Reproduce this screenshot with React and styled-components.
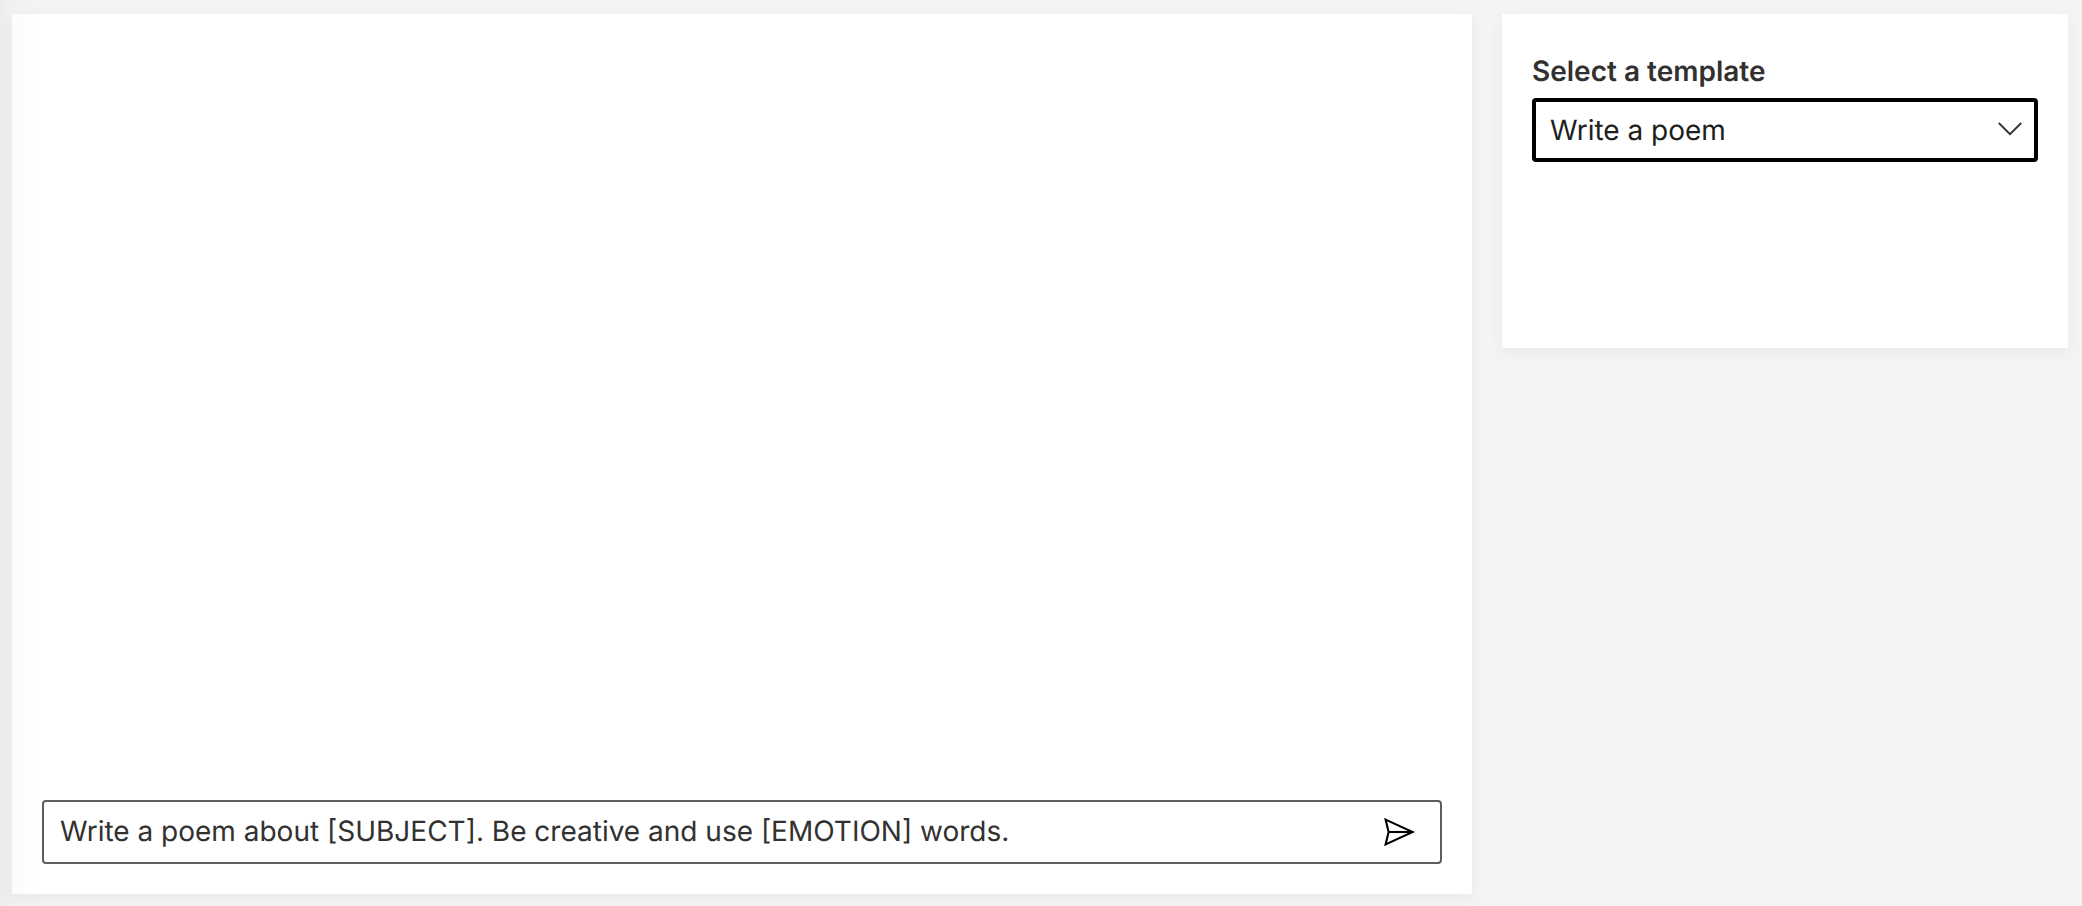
import React, { useState } from "react";
import styled, { createGlobalStyle } from "styled-components";

const GlobalStyle = createGlobalStyle`
  *, *::before, *::after { box-sizing: border-box; }
  body {
    margin: 0;
    background: #f4f4f4;
    color: #323130;
    font-family: Inter, "Liberation Sans", sans-serif;
    font-size: 28px;
    font-weight: 400;
    line-height: 40px;
    text-rendering: geometricPrecision;
  }
`;

const Page = styled.div`
  position: relative;
  display: grid;
  grid-template-columns: minmax(0, 1fr) 566px;
  gap: 30px;
  align-items: start;
  min-height: 100vh;
  padding: 14px 14px 12px 12px;
`;

const EdgeShade = styled.div`
  position: absolute;
  top: 0;
  bottom: 0;
  left: 0;
  width: 44px;
  pointer-events: none;
  background: linear-gradient(to right, rgba(0, 0, 0, 0.03), rgba(0, 0, 0, 0.012) 12px, transparent);
`;

const Panel = styled.section`
  display: flex;
  flex-direction: column;
  padding: 30px;
  background: #fff;
  box-shadow: 0 4px 16px rgba(0, 0, 0, 0.05);
`;

const ChatPanel = styled(Panel)`
  align-self: stretch;
  justify-content: flex-end;
`;

const TemplatePanel = styled(Panel)`
  min-height: 334px;
  padding-top: 37px;
`;

const PromptBar = styled.form`
  display: flex;
  align-items: center;
  height: 64px;
  padding: 0 16px;
  border: 2px solid #605e5c;
  border-radius: 4px;
  background: #fff;
`;

const PromptInput = styled.input`
  flex: 1;
  min-width: 0;
  height: 40px;
  padding: 0 0 2px;
  border: 0;
  outline: none;
  background: transparent;
  color: #323130;
  font: inherit;
  text-rendering: inherit;
`;

const SendButton = styled.button`
  display: flex;
  padding: 4px 8px;
  border: 0;
  background: transparent;
  color: #000;
  cursor: pointer;
`;

const Label = styled.label`
  margin-bottom: 7px;
  font-weight: 600;
`;

const SelectWrap = styled.div`
  position: relative;
`;

const Select = styled.select`
  display: block;
  width: 100%;
  height: 64px;
  padding: 0 56px 0 14px;
  border: 4px solid #000;
  border-radius: 4px;
  outline: none;
  appearance: none;
  background: #fff;
  color: #201f1e;
  font: inherit;
  text-rendering: inherit;
`;

const Chevron = styled.svg`
  position: absolute;
  top: 16px;
  right: 12px;
  width: 32px;
  height: 32px;
  pointer-events: none;
`;

const templates = {
  "Write a poem": "Write a poem about [SUBJECT]. Be creative and use [EMOTION] words.",
};

export default function App() {
  const [template, setTemplate] = useState("Write a poem");
  const [prompt, setPrompt] = useState(templates[template]);

  const chooseTemplate = (event) => {
    setTemplate(event.target.value);
    setPrompt(templates[event.target.value]);
  };

  return (
    <>
      <GlobalStyle />
      <Page>
        <ChatPanel>
          <PromptBar onSubmit={(event) => event.preventDefault()}>
            <PromptInput
              aria-label="Prompt"
              value={prompt}
              onChange={(event) => setPrompt(event.target.value)}
            />
            <SendButton type="submit" aria-label="Send">
              <svg width="32" height="32" viewBox="0 0 32 32" fill="none" stroke="currentColor" strokeWidth="2.1">
                <path d="M1.6 3.6 28.6 16 1.6 28.4 4.6 16Z" />
                <path d="M4.6 16H28.6" />
              </svg>
            </SendButton>
          </PromptBar>
        </ChatPanel>
        <TemplatePanel>
          <Label htmlFor="template">Select a template</Label>
          <SelectWrap>
            <Select id="template" value={template} onChange={chooseTemplate}>
              {Object.keys(templates).map((name) => (
                <option key={name}>{name}</option>
              ))}
            </Select>
            <Chevron viewBox="0 0 32 32" fill="none" stroke="#323130" strokeWidth="1.8" aria-hidden="true">
              <path d="M4.8 9 16 20.2 27.2 9" />
            </Chevron>
          </SelectWrap>
        </TemplatePanel>
        <EdgeShade />
      </Page>
    </>
  );
}
